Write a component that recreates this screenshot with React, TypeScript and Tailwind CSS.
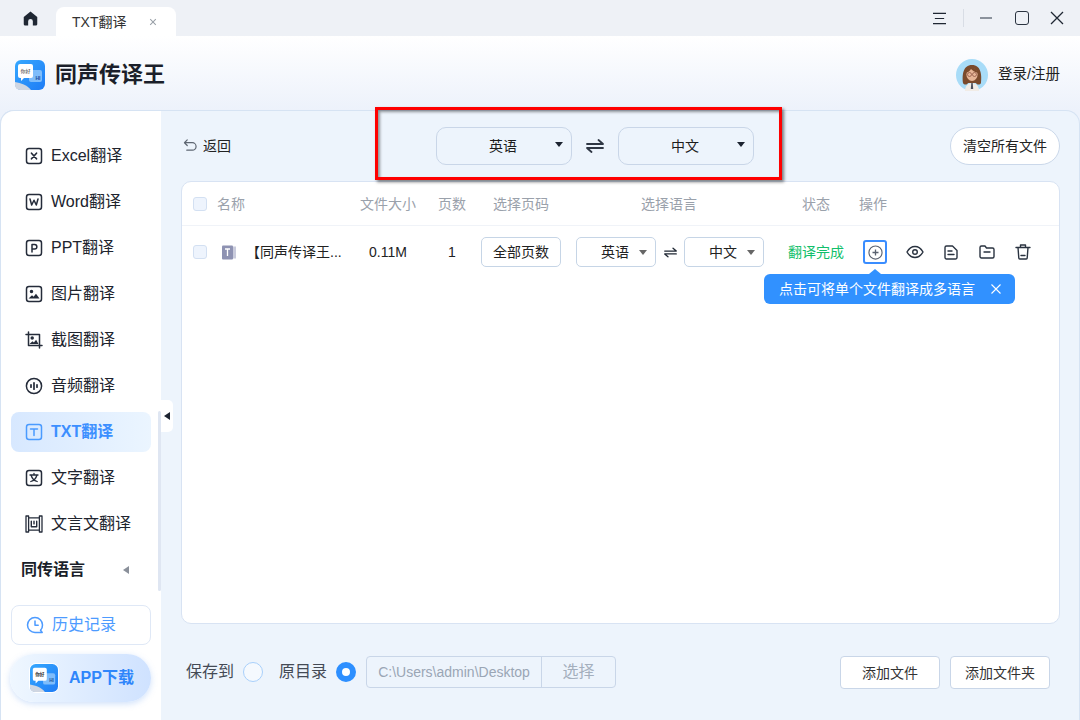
import type { ReactNode } from "react";

const FONT = "font-['Liberation_Sans','Noto_Sans_CJK_SC',sans-serif]";

function Ico({ children, className = "w-[18px] h-[18px]", box = 18 }: { children: ReactNode; className?: string; box?: number }) {
  return (
    <svg viewBox={`0 0 ${box} ${box}`} fill="none" stroke="currentColor" strokeWidth={1.5} strokeLinecap="round" strokeLinejoin="round" className={className}>
      {children}
    </svg>
  );
}

const frame = <rect x="1.5" y="1.5" width="15" height="15" rx="2.5" />;

const menuIcons: Record<string, ReactNode> = {
  excel: <Ico>{frame}<path d="M6.5 6.2l5 5.6M11.5 6.2l-5 5.6" strokeWidth={1.7} /></Ico>,
  word: <Ico>{frame}<path d="M5 6l1.7 6L9 7.2l2.3 4.8L13 6" /></Ico>,
  ppt: <Ico>{frame}<path d="M7 13V5.5h2.6a2.2 2.2 0 0 1 0 4.5H7" /></Ico>,
  image: <Ico>{frame}<circle cx="6.5" cy="6.5" r="1" fill="currentColor" /><path d="M3.5 13.5l3.5-3.2 1.6 1.4 2.4-3 3.5 4.8z" fill="currentColor" stroke="none" /></Ico>,
  crop: (
    <Ico>
      <path d="M1 3.5h13.5V17M3.5 1v13.5H17" />
      <circle cx="7.2" cy="7" r="1" fill="currentColor" />
      <path d="M4.5 13l3-2.8 1.4 1.2 2.2-2.7 2.4 4.3z" fill="currentColor" stroke="none" />
    </Ico>
  ),
  audio: <Ico><circle cx="9" cy="9" r="7.6" /><path d="M6 7.8v2.4M9 5.8v6.4M12 7.8v2.4" strokeWidth={1.7} /></Ico>,
  txt: <Ico>{frame}<path d="M5.5 6h7M9 6v6.5" /></Ico>,
  text: <Ico>{frame}<path d="M5 6h8M9 4.4V6M6.2 6.5c.7 2.6 3 5 6 6M11.8 6.5c-.7 2.6-3 5-6 6" strokeWidth={1.3} /></Ico>,
  classic: (
    <Ico>
      <path d="M1 1h2.600v16H1zM14.400 1H17v16h-2.600zM3.600 2.800h10.800M3.600 15.200h10.800" strokeWidth={1.3} />
      <path d="M6.300 6.300v5.400h5.400V6.300M9 6.300v2.600" strokeWidth={1.4} />
    </Ico>
  ),
};

const menu = [
  { label: "Excel翻译", icon: "excel" },
  { label: "Word翻译", icon: "word" },
  { label: "PPT翻译", icon: "ppt" },
  { label: "图片翻译", icon: "image" },
  { label: "截图翻译", icon: "crop" },
  { label: "音频翻译", icon: "audio" },
  { label: "TXT翻译", icon: "txt", active: true },
  { label: "文字翻译", icon: "text" },
  { label: "文言文翻译", icon: "classic" },
];

function Logo({ className, id }: { className: string; id: string }) {
  return (
    <svg viewBox="0 0 30 30" className={className}>
      <defs>
        <linearGradient id={id} x1="0" y1="0" x2="1" y2="1">
          <stop offset="0" stopColor="#36a8ff" />
          <stop offset="1" stopColor="#1f7cf5" />
        </linearGradient>
      </defs>
      <rect width="30" height="30" rx="6" fill={`url(#${id})`} />
      <path d="M0 22c6 1 12 3 16 8H5a5 5 0 0 1-5-5z" fill="#cfd6e2" />
      <rect x="14" y="10" width="13" height="12" rx="2" fill="#7fbdfb" />
      <path d="M5 4h11a2 2 0 0 1 2 2v10a2 2 0 0 1-2 2H9l-3 3v-3H5a2 2 0 0 1-2-2V6a2 2 0 0 1 2-2z" fill="#fff" />
      <text x="10.500" y="12.500" fontSize="5" textAnchor="middle" fill="#333">你好</text>
      <text x="23" y="19.500" fontSize="5" fontWeight="700" textAnchor="middle" fill="#1e4f9a">HI</text>
    </svg>
  );
}

function Avatar() {
  return (
    <svg viewBox="0 0 32 32" className="w-8 h-8">
      <circle cx="16" cy="16" r="16" fill="#a8dcf8" />
      <path d="M7 24c-1-8 0-18 9-18s10 10 9 18c-1 2-4 2-5 0H12c-1 2-4 2-5 0z" fill="#7a4a2c" />
      <ellipse cx="16" cy="15.500" rx="5.600" ry="6.400" fill="#e6b596" />
      <path d="M10 14c1-4 4-6 7-5.500 2 .5 4 2.500 5 5.500-3-1-6-2.500-7-4-1 2-3 3-5 4z" fill="#7a4a2c" />
      <circle cx="13.500" cy="15.500" r="2" fill="none" stroke="#7a4030" strokeWidth=".6" />
      <circle cx="18.500" cy="15.500" r="2" fill="none" stroke="#7a4030" strokeWidth=".6" />
      <path d="M9 32c0-5 3-8 7-8s7 3 7 8z" fill="#f1ece6" />
      <path d="M15.300 24h1.400l.5 6h-2.400z" fill="#4a4f5c" />
    </svg>
  );
}

function SmallSelect({ label }: { label: string }) {
  return (
    <div className="relative w-20 h-[30px] rounded-[5px] border border-[#c6d5e6] bg-white flex items-center text-sm text-[#222]">
      <span className="pl-6">{label}</span>
      <span className="absolute right-[8px] top-[12px] w-0 h-0 border-x-[4px] border-x-transparent border-t-[5px] border-t-[#666]" />
    </div>
  );
}

function BigSelect({ label }: { label: string }) {
  return (
    <div className="relative w-[136px] h-[38px] rounded-[10px] border border-[#c9d6e8] flex items-center text-sm text-[#1c1c1c]">
      <span className="pl-[52px]">{label}</span>
      <span className="absolute right-[8px] top-[14px] w-0 h-0 border-x-[4px] border-x-transparent border-t-[5px] border-t-[#1c2330]" />
    </div>
  );
}

function Swap({ className }: { className: string }) {
  return (
    <svg viewBox="0 0 18 14" fill="none" stroke="currentColor" strokeWidth={1.8} strokeLinecap="round" strokeLinejoin="round" className={className}>
      <path d="M1 5h16L12.500 1M17 9H1l4.500 4" />
    </svg>
  );
}

function Checkbox() {
  return <span className="block w-[14px] h-[14px] rounded-[3px] border border-[#d3e0f2] bg-[#eef4fd]" />;
}

export default function App() {
  return (
    <div className={`relative w-[1080px] h-[720px] overflow-hidden bg-white text-[#1f2430] ${FONT}`}>
      {/* title bar */}
      <div className="h-9 bg-[#eef1f6] flex items-end">
        <div className="w-[62px] h-9 flex items-center justify-center pr-[2px]">
          <svg viewBox="0 0 16 16" className="w-[15px] h-[15px]" fill="#1f2733">
            <path d="M8 .6L15.200 6.300V14a1.500 1.500 0 0 1-1.500 1.500H10.500V11a2.500 2.500 0 0 0-5 0v4.500H2.300A1.500 1.500 0 0 1 .8 14V6.300z" />
          </svg>
        </div>
        <div className="-ml-[6px] w-[120px] h-[29px] bg-white rounded-t-[8px] flex items-center pl-4 text-sm text-[#333]">
          TXT翻译
          <svg viewBox="0 0 10 10" className="w-2 h-2 ml-[23px] text-[#9aa0a8]" stroke="currentColor" strokeWidth={1.3}>
            <path d="M1.500 1.500l7 7M8.500 1.500l-7 7" />
          </svg>
        </div>
        <div className="ml-auto h-9 flex items-center pr-[16px] text-[#1f2733]">
          <svg viewBox="0 0 16 14" className="w-[15px] h-[13px]" stroke="currentColor" strokeWidth={1.2} fill="none">
            <path d="M1 1.500h14M3 7h10M1 12.500h14" />
          </svg>
          <span className="w-px h-[18px] bg-[#d8dde5] mx-[16px]" />
          <span className="w-[12px] h-[2px] bg-[#8b929c] mr-[23px]" />
          <span className="w-[14px] h-[14px] rounded-[3px] border-[1.500px] border-[#2a3340] mr-[21px]" />
          <svg viewBox="0 0 14 14" className="w-[14px] h-[14px]" stroke="currentColor" strokeWidth={1.3} fill="none">
            <path d="M1 1l12 12M13 1L1 13" />
          </svg>
        </div>
      </div>

      {/* brand header */}
      <div className="h-[74px] pt-[4px] bg-gradient-to-b from-white to-[#edf2fb] flex items-center pl-[15px] pr-5">
        <Logo id="lg1" className="w-[30px] h-[30px] mr-[10px]" />
        <span className="text-[22px] leading-none font-bold text-[#1b1f2a]">同声传译王</span>
        <div className="ml-auto flex items-center gap-[10px]">
          <Avatar />
          <span className="text-[14.500px] text-[#222]">登录/注册</span>
        </div>
      </div>

      {/* main */}
      <div className="relative h-[610px] flex bg-[#edf2fb]">
        <div className="absolute inset-0 rounded-t-[14px] border-t border-x border-[#d6e3f3] bg-[#edf4fc] pointer-events-none" />

        {/* sidebar */}
        <aside className="relative w-[161px] h-full rounded-tl-[14px] border-l border-t border-[#d6e3f3] bg-white pt-[25px] pl-[10px] flex flex-col">
          {menu.map((m) => (
            <div
              key={m.label}
              className={
                m.active
                  ? "w-[140px] h-10 mb-[6px] shrink-0 rounded-[8px] bg-gradient-to-r from-[#d7e8ff] to-[#ebf5ff] flex items-center gap-2 pl-[14px] text-[#3c8fff] font-bold"
                  : "w-[140px] h-10 mb-[6px] shrink-0 flex items-center gap-2 pl-[14px] text-[#20242e]"
              }
            >
              <span className={m.active ? "text-[#4a9bff]" : "text-[#252c3a]"}>{menuIcons[m.icon]}</span>
              <span className="text-base">{m.label}</span>
            </div>
          ))}
          <div className="w-[140px] h-10 shrink-0 flex items-center pl-[10px] pr-[22px] justify-between font-bold text-[#1b1f2a]">
            <span className="text-base">同传语言</span>
            <span className="w-0 h-0 border-y-[4.500px] border-y-transparent border-r-[6px] border-r-[#8a909a]" />
          </div>
          <div className="w-[140px] h-10 shrink-0 mt-[15px] rounded-[8px] border border-[#dfe8f6] flex items-center pl-[14px] gap-[8px] text-[#4d9bff]">
            <svg viewBox="0 0 18 18" className="w-[18px] h-[18px]" fill="none" stroke="currentColor" strokeWidth={1.500} strokeLinecap="round" strokeLinejoin="round">
              <path d="M16.500 9A7.500 7.500 0 1 0 9 16.500h7.200l-1.700-2.200A7.400 7.400 0 0 0 16.500 9z" />
              <path d="M9 5v4.300h3.200" />
            </svg>
            <span className="text-base">历史记录</span>
          </div>
          <div className="w-[141px] h-[48px] shrink-0 mt-[9px] rounded-full bg-gradient-to-r from-[#eff7ff] to-[#cfe2ff] shadow-[0_2px_6px_rgba(120,170,240,.35)] flex items-center pl-[19px] gap-[10px] font-bold text-[#2f86fb] -ml-px">
            <span className="bg-white rounded-[7px] p-px flex">
              <Logo id="lg2" className="w-[28px] h-[28px]" />
            </span>
            <span className="text-base">APP下载</span>
          </div>
          <div className="absolute right-0 top-[300px] w-[3px] h-[180px] rounded-full bg-[#dfe6f2]" />
        </aside>

        {/* collapse handle */}
        <div className="absolute left-[161px] top-[290px] w-3 h-8 bg-white rounded-r-[5px] flex items-center justify-center z-10">
          <span className="w-0 h-0 border-y-[4.500px] border-y-transparent border-r-[6px] border-r-[#1c2330]" />
        </div>

        {/* content */}
        <main className="relative flex-1 pl-5 pr-5">
          <div className="h-[71px] flex items-center">
            <div className="w-[255px] flex items-center pl-[2px] gap-[5px] text-sm text-[#222]">
              <svg viewBox="0 0 16 14" className="w-[15px] h-[13px] text-[#5e6672]" fill="none" stroke="currentColor" strokeWidth={1.300} strokeLinecap="round" strokeLinejoin="round">
                <path d="M4.500 1L1.500 4l3 3M1.500 4h8.500a4 4 0 0 1 0 8H4" />
              </svg>
              返回
            </div>
            <BigSelect label="英语" />
            <div className="w-[46px] flex justify-center text-[#2f3744]">
              <Swap className="w-[18px] h-[14px]" />
            </div>
            <BigSelect label="中文" />
            <button className="ml-auto w-[110px] h-[38px] rounded-full border border-[#cbd8ea] bg-white text-sm text-[#222]">清空所有文件</button>
          </div>

          <div className="relative h-[443px] rounded-[10px] border border-[#d8e3f3] bg-white">
            <div className="h-11 flex items-center border-b border-[#f0f3f8] text-sm text-[#9aa1ab]">
              <div className="w-[166px] flex items-center pl-[11px] gap-[10px]">
                <Checkbox />
                <span>名称</span>
              </div>
              <div className="w-20 text-center">文件大小</div>
              <div className="w-12 text-center">页数</div>
              <div className="w-[90px] text-center">选择页码</div>
              <div className="w-[206px] text-center">选择语言</div>
              <div className="w-[88px] text-center">状态</div>
              <div className="-ml-px">操作</div>
            </div>
            <div className="h-[52px] flex items-center text-sm text-[#222]">
              <div className="w-[166px] flex items-center pl-[11px]">
                <Checkbox />
                <svg viewBox="0 0 14 15" className="w-[14px] h-[15px] ml-[15px] shrink-0">
                  <rect x="9" y="1.500" width="5" height="12" fill="#c9cbdc" />
                  <rect x="0" y="0.500" width="11" height="14" rx="1" fill="#8e92b2" />
                  <path d="M3 4h5M5.500 4v7" stroke="#fff" strokeWidth="1.300" fill="none" />
                </svg>
                <span className="ml-[10px] whitespace-nowrap">【同声传译王...</span>
              </div>
              <div className="w-20 text-center">0.11M</div>
              <div className="w-12 text-center">1</div>
              <div className="w-[90px] flex justify-center">
                <button className="w-20 h-[30px] rounded-[5px] border border-[#c6d5e6] bg-white text-sm text-[#222]">全部页数</button>
              </div>
              <div className="w-[206px] flex items-center pl-[10px]">
                <SmallSelect label="英语" />
                <div className="w-7 flex justify-center text-[#1f2733]">
                  <Swap className="w-[13px] h-[11px]" />
                </div>
                <SmallSelect label="中文" />
              </div>
              <div className="w-[88px] text-center text-sm text-[#12bf6b]">翻译完成</div>
              <div className="flex items-center pl-[3px] text-[#2a3340]">
                <span className="w-6 h-6 rounded-[3px] border-2 border-[#3a8dff] flex items-center justify-center text-[#5a6270]">
                  <svg viewBox="0 0 16 16" className="w-[15px] h-[15px]" fill="none" stroke="currentColor" strokeWidth={1.200}>
                    <circle cx="8" cy="8" r="7" />
                    <path d="M8 4.800v6.400M4.800 8h6.400" strokeWidth={1.400} />
                  </svg>
                </span>
                <svg viewBox="0 0 18 14" className="w-[18px] h-[14px] ml-[19px]" fill="none" stroke="currentColor" strokeWidth={1.400}>
                  <path d="M1 7c2-3.600 4.800-5.500 8-5.500s6 1.900 8 5.500c-2 3.600-4.800 5.500-8 5.500S3 10.600 1 7z" />
                  <circle cx="9" cy="7" r="2.300" />
                </svg>
                <svg viewBox="0 0 14 15" className="w-[14px] h-[15px] ml-[20px]" fill="none" stroke="currentColor" strokeWidth={1.400} strokeLinejoin="round" strokeLinecap="round">
                  <path d="M2.500 1h6l4.500 4.500v7a1.500 1.500 0 0 1-1.500 1.500h-9A1.500 1.500 0 0 1 1 12.500v-10A1.500 1.500 0 0 1 2.500 1z" />
                  <path d="M4 6h4M4 9.500h6" />
                </svg>
                <svg viewBox="0 0 16 14" className="w-4 h-[14px] ml-[21px]" fill="none" stroke="currentColor" strokeWidth={1.400} strokeLinejoin="round" strokeLinecap="round">
                  <path d="M1 2.500A1.500 1.500 0 0 1 2.500 1h3.500l1.500 2h6A1.500 1.500 0 0 1 15 4.500v7a1.500 1.500 0 0 1-1.500 1.500h-11A1.500 1.500 0 0 1 1 11.500z" />
                  <path d="M5 7h6" />
                </svg>
                <svg viewBox="0 0 16 16" className="w-4 h-4 ml-[20px]" fill="none" stroke="currentColor" strokeWidth={1.400} strokeLinejoin="round" strokeLinecap="round">
                  <path d="M1 3.500h14M3 3.500l.8 10.500a1 1 0 0 0 1 1h6.400a1 1 0 0 0 1-1l.8-10.500M5.500 3.200V1h5v2.200M6 11.500h4" />
                </svg>
              </div>
            </div>

            {/* tooltip */}
            <div className="absolute left-[582px] top-[92px] w-[251px] h-[30px] rounded-[6px] bg-[#3191ff] flex items-center pl-[15px] text-sm text-white">
              <span className="absolute left-[105px] -top-[5px] w-0 h-0 border-x-[6px] border-x-transparent border-b-[5px] border-b-[#3191ff]" />
              点击可将单个文件翻译成多语言
              <svg viewBox="0 0 10 10" className="w-[10px] h-[10px] ml-[16px]" stroke="currentColor" strokeWidth={1.100}>
                <path d="M.5.5l9 9M9.500.5l-9 9" />
              </svg>
            </div>
          </div>

          <div className="mt-[32px] flex items-start">
            <div className="h-[32px] flex items-center pl-[5px] text-base text-[#444a55]">
              <span>保存到</span>
              <span className="ml-[9px] w-5 h-5 rounded-full border border-[#a9d0fb] bg-[#f5f9fe]" />
              <span className="ml-[16px]">原目录</span>
              <span className="ml-[9px] w-5 h-5 rounded-full border-[6px] border-[#2d8fff] bg-white" />
            </div>
            <div className="ml-[10px] w-[250px] h-[32px] rounded-[4px] border border-[#c9d6e8] flex items-center">
              <span className="w-[175px] h-full flex items-center justify-center border-r border-[#c9d6e8] text-sm text-[#9aa6b5]">C:\Users\admin\Desktop</span>
              <span className="flex-1 text-center text-base text-[#a4afbd]">选择</span>
            </div>
            <button className="ml-auto w-[100px] h-[33px] rounded-[4px] border border-[#c9d6e8] bg-white text-sm text-[#333]">添加文件</button>
            <button className="ml-[10px] mr-[10px] w-[100px] h-[33px] rounded-[4px] border border-[#c9d6e8] bg-white text-sm text-[#333]">添加文件夹</button>
          </div>
        </main>
      </div>

      {/* red annotation box */}
      <div className="absolute left-[375px] top-[107px] w-[407px] h-[73px] border-[3px] border-[#ff0000] shadow-[2px_2px_3px_rgba(0,0,0,.5),inset_2px_2px_3px_rgba(0,0,0,.4)] pointer-events-none" />
    </div>
  );
}
